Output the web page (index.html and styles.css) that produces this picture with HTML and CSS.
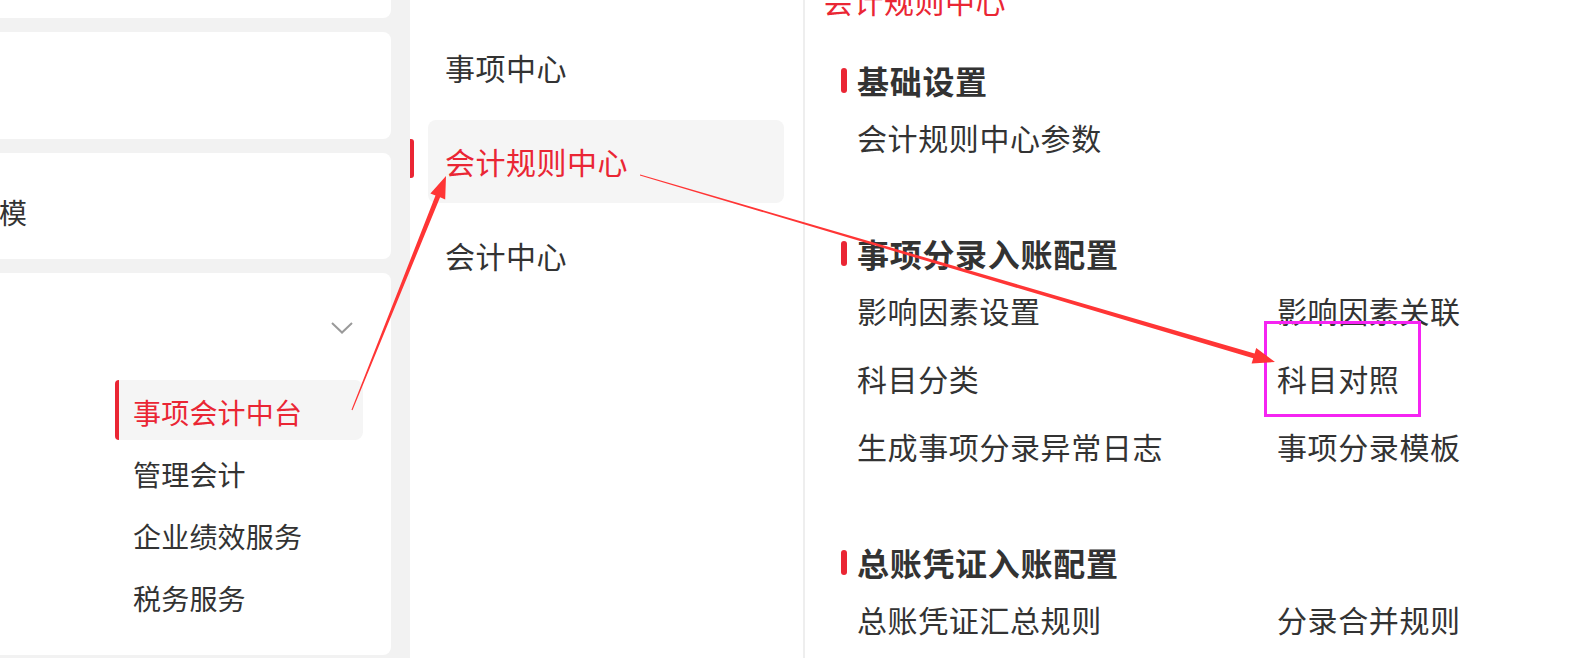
FILE: index.html
```
<!DOCTYPE html>
<html>
<head>
    <title>会计规则中心</title>
    <link rel="stylesheet" href="styles.css">
</head>
<body>
    <aside class="side">
        <div class="card"></div>
        <div class="card"></div>
        <div class="card card-title">业务建模</div>
        <div class="card card-open">
            <div class="card-head">
                <svg class="chevron" width="22" height="12" viewBox="0 0 22 12">
                    <polyline points="1,1 11,10.5 21,1" fill="none" stroke="#9a9a9a" stroke-width="2"/>
                </svg>
            </div>
            <ul class="sub-menu">
                <li class="active">事项会计中台</li>
                <li>管理会计</li>
                <li>企业绩效服务</li>
                <li>税务服务</li>
            </ul>
        </div>
    </aside>

    <nav class="mid">
        <div class="mid-item">事项中心</div>
        <div class="mid-item active">会计规则中心</div>
        <div class="mid-item">会计中心</div>
    </nav>

    <main class="content">
        <div class="content-title">会计规则中心</div>

        <section class="group">
            <h2>基础设置</h2>
            <div class="links">
                <span>会计规则中心参数</span>
            </div>
        </section>

        <section class="group">
            <h2>事项分录入账配置</h2>
            <div class="links">
                <span>影响因素设置</span>
                <span>影响因素关联</span>
                <span>科目分类</span>
                <span>科目对照</span>
                <span>生成事项分录异常日志</span>
                <span>事项分录模板</span>
            </div>
        </section>

        <section class="group">
            <h2>总账凭证入账配置</h2>
            <div class="links">
                <span>总账凭证汇总规则</span>
                <span>分录合并规则</span>
            </div>
        </section>
    </main>

    <!-- annotations drawn over the screenshot -->
    <div class="mark-box"></div>
    <svg class="arrows" width="1588" height="658" viewBox="0 0 1588 658">
        <polygon fill="#ff3535" points="351.5,409.8 435.5,195.5 430.4,193.4 446,176 445.2,199.4 440.1,197.3 352.5,410.2"/>
        <polygon fill="#ff3535" points="639.9,175.5 1253.2,358.2 1251.6,363.5 1275,362 1256.2,348.1 1254.6,353.4 640.1,174.5"/>
    </svg>
</body>
</html>
```

FILE: styles.css
```
:root {
    --red: #ea2634;
    --text: #333;
    --gray-bg: #f2f2f2;
    --active-bg: #f5f5f5;
}

body {
    margin: 0;
    height: 658px;
    overflow: hidden;
    display: flex;
    position: relative;
    background: white;
    color: var(--text);
    font-family: "Noto Sans CJK SC", "Liberation Sans", sans-serif;
}

/* Left panel, partly scrolled off the left edge */
.side {
    flex: none;
    width: 511px;
    margin-left: -120px;
    padding-right: 19px;
    margin-top: -89px;
    background: var(--gray-bg);
    display: flex;
    flex-direction: column;
    gap: 14px;
}

.card {
    flex: none;
    height: 107px;
    background: white;
    border-radius: 8px;
}

.card-title {
    height: 106px;
    display: flex;
    align-items: center;
    box-sizing: border-box;
    padding: 12px 0 0 35px;
    font-size: 28px;
    line-height: 40px;
}

.card-open {
    height: auto;
    padding-bottom: 27px;
}

.card-head {
    height: 107px;
    display: flex;
    justify-content: flex-end;
    align-items: center;
    padding-right: 38px;
}

.chevron {
    margin-top: 2px;
}

.sub-menu {
    list-style: none;
    margin: 0 0 0 235px;
    padding: 0;
    width: 248px;
}

.sub-menu li {
    height: 60px;
    margin-bottom: 2px;
    box-sizing: border-box;
    padding: 4px 0 0 18px;
    line-height: 56px;
    font-size: 28px;
    letter-spacing: 0.2px;
}

.sub-menu li.active {
    color: var(--red);
    background: var(--active-bg);
    border-left: 4px solid var(--red);
    border-radius: 4px 8px 8px 4px;
    padding-left: 14px;
}

/* Middle column */
.mid {
    flex: none;
    width: 356px;
    padding: 26px 19px 0 18px;
    border-right: 2px solid #eee;
    display: flex;
    flex-direction: column;
    gap: 11px;
}

.mid-item {
    position: relative;
    height: 83px;
    padding-left: 17px;
    line-height: 83px;
    font-size: 30px;
    letter-spacing: 0.5px;
    border-radius: 8px;
}

.mid-item.active {
    color: var(--red);
    background: var(--active-bg);
}

.mid-item.active::before {
    content: "";
    position: absolute;
    left: -18px;
    top: 19px;
    width: 4px;
    height: 39px;
    background: var(--red);
    border-radius: 0 3px 3px 0;
}

/* Right content */
.content {
    flex: 1;
    padding-left: 18px;
}

.content-title {
    margin-top: -20px;
    line-height: 40px;
    font-size: 30px;
    letter-spacing: 0.5px;
    color: var(--red);
}

.group {
    padding-left: 18px;
    margin-top: 40px;
}

.group + .group {
    margin-top: 76px;
}

.group h2 {
    margin: 0;
    display: flex;
    align-items: center;
    line-height: 40px;
    font-size: 32px;
    font-weight: bold;
    letter-spacing: 0.7px;
}

.group h2::before {
    content: "";
    width: 6px;
    height: 25px;
    margin-right: 10px;
    border-radius: 3px;
    background: var(--red);
}

.links {
    margin-top: 17px;
    padding-left: 16px;
    display: grid;
    grid-template-columns: 420px 420px;
    row-gap: 28px;
    font-size: 30px;
    line-height: 40px;
    letter-spacing: 0.6px;
}

/* Annotations */
.mark-box {
    position: absolute;
    left: 1264px;
    top: 321px;
    width: 151px;
    height: 90px;
    border: 3px solid #f524f2;
}

.arrows {
    position: absolute;
    left: 0;
    top: 0;
    pointer-events: none;
}
```
